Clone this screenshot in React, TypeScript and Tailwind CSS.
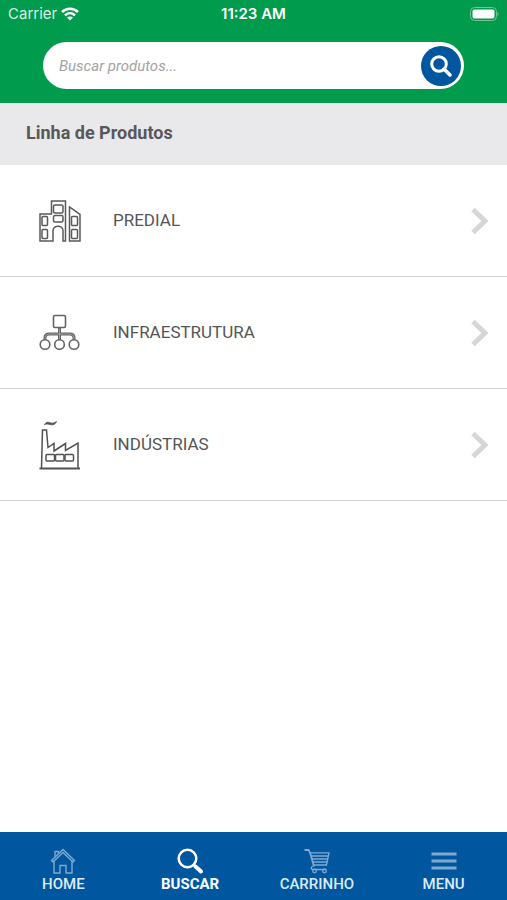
import React from "react";

const BuildingIcon = () => (
	<svg width="42" height="42" viewBox="0 0 42 42" fill="none" stroke="#58595b" strokeWidth="1.500">
		<path d="M12.500 41H1V14H12.500V1H26.500V41H24V31C24 24.500 14 24.500 14 31V41Z" />
		<path d="M30.500 41V7L41 14.500V41Z" />
		<rect x="14.500" y="5" width="9.500" height="8" rx="1.500" />
		<rect x="14.500" y="15.500" width="9.500" height="6.500" rx="1.500" />
		<rect x="3" y="16.500" width="5.500" height="9" rx="1" />
		<rect x="3" y="29.500" width="5.500" height="9" rx="1" />
		<rect x="32.500" y="16.500" width="6" height="9" rx="1" />
		<rect x="32.500" y="29.500" width="6" height="9" rx="1" />
	</svg>
);

const NetworkIcon = () => (
	<svg width="42" height="38" viewBox="0 0 42 38" fill="none" stroke="#636466">
		<rect x="14.500" y="1.500" width="12" height="12" rx="1.500" strokeWidth="1.600" />
		<path d="M20.500 13.500V26M6 26V24Q6 20 10 20H31Q35 20 35 24V26" strokeWidth="3" />
		<path d="M20.500 14.500V25M6 25V24Q6 20 10 20H31Q35 20 35 24V25" stroke="#c4c4c5" strokeWidth="0.600" />
		<g fill="#fff" strokeWidth="1.600">
			<circle cx="6" cy="30.500" r="4.800" />
			<circle cx="20.500" cy="30.500" r="4.800" />
			<circle cx="35" cy="30.500" r="4.800" />
		</g>
	</svg>
);

const FactoryIcon = () => (
	<svg width="42" height="50" viewBox="0 0 42 50" fill="none" stroke="#505153" strokeWidth="1.500">
		<path d="M2.500 48L3.500 10H7.500L9 27.500L15 23.500V31L26.500 23.500V30.500L39 23V48" />
		<path d="M0.500 48.500H41" strokeWidth="2.200" />
		<path d="M5.500 4.500C8 1 10 2.500 12 3S15 3 17.500 1.500C15.500 5.500 13 5 11 4.500S8 3.500 5.500 4.500Z" fill="#505153" strokeWidth="0.800" />
		<rect x="7" y="34.500" width="8.500" height="6.500" rx="1" />
		<rect x="16.500" y="34.500" width="8.500" height="6.500" rx="1" />
		<rect x="26" y="34.500" width="8.500" height="6.500" rx="1" />
	</svg>
);

const ChevronIcon = () => (
	<svg width="18" height="28" viewBox="0 0 18 28" fill="none" stroke="#d6d6d6" strokeWidth="5">
		<path d="M2 2.500L14 14L2 25.500" />
	</svg>
);

const HomeIcon = () => (
	<svg width="26" height="26" viewBox="0 0 26 26" fill="none" stroke="#7fa9d0" strokeWidth="1.400">
		<path d="M4 12.500V25H10V17.500H16V25H22V12.500" />
		<path d="M1.500 12.500L13 1.500L24.500 12.500L23 14L13 4.500L3 14Z" />
		<path d="M5 8.500V3.500H8.500V5.500" />
	</svg>
);

const SearchIcon = () => (
	<svg width="26" height="26" viewBox="0 0 26 26" fill="none" stroke="#fff">
		<circle cx="10.500" cy="10.500" r="8.800" strokeWidth="2.500" />
		<path d="M17 17L19 19" strokeWidth="2.500" />
		<path d="M18.500 18.500L24 23.500" strokeWidth="4" strokeLinecap="round" />
	</svg>
);

const CartIcon = () => (
	<svg width="26" height="26" viewBox="0 0 26 26" fill="none" stroke="#7fa9d0" strokeWidth="1.300">
		<path d="M0.500 2H4.500L6 4.500L10 18.500" strokeWidth="1.800" />
		<path d="M6 4.800H25L22.500 17H9.500M7 8H24M8 11H23.500M9 14H23" />
		<path d="M10 17.500C6.500 18.500 6.500 21.500 9 21.500H22.500" />
		<circle cx="10.500" cy="23" r="1.800" />
		<circle cx="20.500" cy="23" r="1.800" />
	</svg>
);

const MenuIcon = () => (
	<svg width="26" height="26" viewBox="0 0 26 26" stroke="#7fa9d0" strokeWidth="2.800">
		<path d="M0.500 6H25.500M0.500 13H25.500M0.500 20H25.500" />
	</svg>
);

const lines = [
	{ name: "PREDIAL", icon: <BuildingIcon /> },
	{ name: "INFRAESTRUTURA", icon: <NetworkIcon /> },
	{ name: "INDÚSTRIAS", icon: <FactoryIcon /> },
];

const tabs = [
	{ name: "HOME", icon: <HomeIcon /> },
	{ name: "BUSCAR", icon: <SearchIcon />, active: true },
	{ name: "CARRINHO", icon: <CartIcon /> },
	{ name: "MENU", icon: <MenuIcon /> },
];

const StatusBar = () => (
	<div className="grid grid-cols-3 items-center h-7 px-2 font-[Inter,sans-serif] text-[15px] text-white">
		<div className="flex items-center gap-1 text-[#d9f0e2]">
			<span>Carrier</span>
			<svg width="18" height="14" viewBox="0 0 18 14" fill="none" stroke="#fff" strokeWidth="2.500">
				<path d="M1 5C5.500 0.500 12.500 0.500 17 5" />
				<path d="M4 8.300C7 5.500 11 5.500 14 8.300" />
				<path d="M9 13.500L6 10.500C7.800 9 10.200 9 12 10.500Z" fill="#fff" stroke="none" />
			</svg>
		</div>
		<span className="text-center font-semibold whitespace-nowrap">11:23 AM</span>
		<svg className="justify-self-end" width="30" height="14" viewBox="0 0 30 14">
			<rect x="1.500" y="0.500" width="26" height="13" rx="4" fill="none" stroke="#73c595" />
			<rect x="3.500" y="2.500" width="22" height="9" rx="2" fill="#fff" />
			<path d="M28.500 5C30 5.500 30 8.500 28.500 9Z" fill="#73c595" />
		</svg>
	</div>
);

const App = () => {
	return (
		<div className="flex flex-col min-h-screen bg-white font-[Roboto,sans-serif]">
			<header className="bg-[#009b4d] pb-3.5">
				<StatusBar />
				<form className="flex items-center h-[47px] mt-3.5 mx-[43px] pl-4 pr-[3px] bg-white rounded-full" onSubmit={(e) => e.preventDefault()}>
					<input
						type="text"
						aria-label="Buscar produtos"
						placeholder="Buscar produtos..."
						className="flex-1 min-w-0 h-6 text-[15px] italic text-[#555] placeholder:text-[#a3a3a3] outline-none"
					/>
					<button type="submit" aria-label="Buscar" className="flex items-center justify-center size-10 rounded-full bg-[#00579f]">
						<svg width="22" height="22" viewBox="0 0 22 22" fill="none" stroke="#fff" strokeWidth="3">
							<circle cx="9" cy="9" r="7.300" />
							<path d="M14 14L20 20" strokeWidth="3.500" strokeLinecap="round" />
						</svg>
					</button>
				</form>
			</header>

			<main className="flex-1">
				<h1 className="flex items-center h-[62px] pl-[26px] pb-0.5 bg-[#e9e9eb] text-lg font-bold text-[#58585a]">Linha de Produtos</h1>
				<ul>
					{lines.map((line) => (
						<li key={line.name}>
							<button type="button" className="flex items-center w-full h-28 pl-[39px] pr-[18px] border-b border-[#d2d2d2] text-left">
								{line.icon}
								<span className="flex-1 pl-8 text-[17px] text-[#555]">{line.name}</span>
								<ChevronIcon />
							</button>
						</li>
					))}
				</ul>
			</main>

			<nav className="grid grid-cols-4 h-[68px] bg-[#00579f]">
				{tabs.map((tab) => (
					<a
						key={tab.name}
						href="#"
						className={`flex flex-col items-center pt-4 text-[15px] leading-5 ${tab.active ? "font-bold text-white" : "font-medium text-[#dceaf6]"}`}
					>
						{tab.icon}
						{tab.name}
					</a>
				))}
			</nav>
		</div>
	);
};

export default App;
